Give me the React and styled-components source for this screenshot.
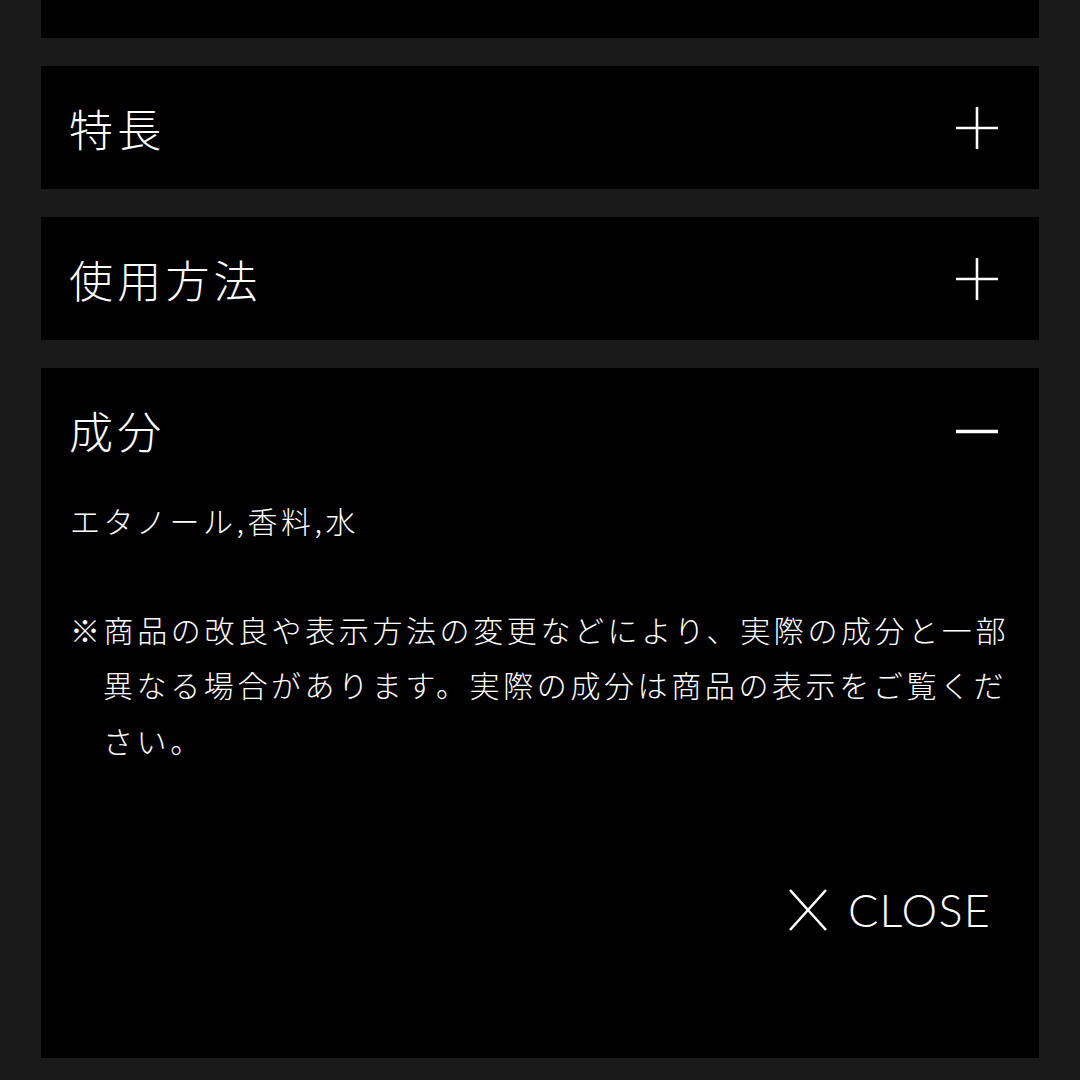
import React, { useState } from "react";
import styled, { createGlobalStyle } from "styled-components";

const GlobalStyle = createGlobalStyle`
  html, body {
    margin: 0;
    padding: 0;
    background: #1a1a1a;
  }
  body {
    font-family: "Noto Sans CJK JP", "Noto Sans", sans-serif;
    color: #fff;
  }
`;

const items = [
  { id: "feature", title: "特長", body: null },
  { id: "usage", title: "使用方法", body: null },
  {
    id: "ingredients",
    title: "成分",
    body: {
      list: "エタノール,香料,水",
      note:
        "※商品の改良や表示方法の変更などにより、実際の成分と一部異なる場合があります。実際の成分は商品の表示をご覧ください。",
    },
  },
];

function App() {
  const [open, setOpen] = useState("ingredients");

  const toggle = (id) => {
    setOpen(open === id ? null : id);
  };

  return (
    <>
      <GlobalStyle />
      <Page>
        <List>
          {/* bottom edge of the previous section, scrolled out of view */}
          <TopCard />
          {items.map((item) => (
            <Card key={item.id}>
              <Header onClick={() => toggle(item.id)}>
                <Title>{item.title}</Title>
                <ToggleIcon open={open === item.id} />
              </Header>
              {open === item.id && item.body && (
                <Body>
                  <Ingredients>{item.body.list}</Ingredients>
                  <Note>{item.body.note}</Note>
                  <CloseRow>
                    <CloseButton onClick={() => setOpen(null)}>
                      <svg width="40" height="42" viewBox="0 0 40 42">
                        <path
                          d="M2 1 L38 41 M38 1 L2 41"
                          stroke="#fff"
                          strokeWidth="2.6"
                          fill="none"
                        />
                      </svg>
                      <CloseLabel>CLOSE</CloseLabel>
                    </CloseButton>
                  </CloseRow>
                </Body>
              )}
            </Card>
          ))}
        </List>
      </Page>
    </>
  );
}

function ToggleIcon({ open }) {
  return (
    <Icon width="42" height="42" viewBox="0 0 42 42">
      {open ? (
        <path d="M0 22.5 H42" stroke="#fff" strokeWidth="3.5" />
      ) : (
        <path d="M0 21 H42 M21 0 V42" stroke="#fff" strokeWidth="2.6" />
      )}
    </Icon>
  );
}

export default App;

const Page = styled.div`
  height: 1080px;
  overflow: hidden;
  padding: 0 41px;
`;

const List = styled.div`
  display: flex;
  flex-direction: column;
  gap: 28px;
`;

const Card = styled.section`
  background: #000;
`;

const TopCard = styled(Card)`
  height: 38px;
`;

const Header = styled.div`
  height: 123px;
  display: flex;
  align-items: center;
  justify-content: space-between;
  padding: 0 41px 0 28px;
  cursor: pointer;
`;

const Title = styled.h3`
  margin: 0;
  font-size: 44px;
  font-weight: 300;
  letter-spacing: 4.2px;
  line-height: 1;
`;

const Icon = styled.svg`
  display: block;
  flex: none;
`;

const Body = styled.div`
  padding: 2px 28px 118px 29px;
`;

const Ingredients = styled.p`
  margin: 0;
  font-size: 30px;
  font-weight: 300;
  letter-spacing: 3.5px;
  line-height: 55.5px;
`;

const Note = styled.p`
  margin: 53px 0 0;
  font-size: 30px;
  font-weight: 300;
  letter-spacing: 3.6px;
  line-height: 55.5px;
  padding-left: 33px;
  text-indent: -33px;
`;

const CloseRow = styled.div`
  display: flex;
  justify-content: flex-end;
  margin-top: 112px;
  padding-right: 20px;
`;

const CloseButton = styled.button`
  display: flex;
  align-items: center;
  gap: 20px;
  height: 60px;
  padding: 0;
  background: none;
  border: none;
  color: #fff;
  cursor: pointer;
`;

const CloseLabel = styled.span`
  font-family: Lato, "Noto Sans", sans-serif;
  font-weight: 300;
  font-size: 45px;
  letter-spacing: 1.2px;
  line-height: 1;
`;
